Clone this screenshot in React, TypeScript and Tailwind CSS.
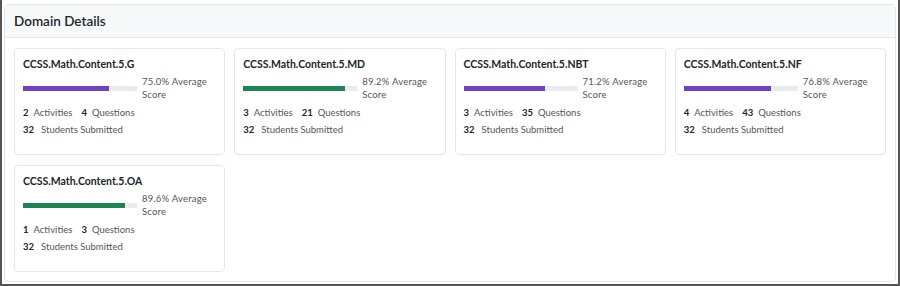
const domains = [
  { code: 'CCSS.Math.Content.5.G', score: 75.0, activities: 2, questions: 4, students: 32 },
  { code: 'CCSS.Math.Content.5.MD', score: 89.2, activities: 3, questions: 21, students: 32 },
  { code: 'CCSS.Math.Content.5.NBT', score: 71.2, activities: 3, questions: 35, students: 32 },
  { code: 'CCSS.Math.Content.5.NF', score: 76.8, activities: 4, questions: 43, students: 32 },
  { code: 'CCSS.Math.Content.5.OA', score: 89.6, activities: 1, questions: 3, students: 32 },
]

function DomainCard({ d }: { d: (typeof domains)[number] }) {
  const good = d.score >= 80
  return (
    <div className="bg-white border border-[#e3e6ea] rounded-[4px] px-[8px] pt-[8px] h-[107px]">
      <h3 className="text-[10.5px] leading-[14px] font-bold text-[#212529]">{d.code}</h3>
      <div className="flex items-center gap-[5px] mt-[4px]">
        <div className="w-[114px] h-[5px] bg-[#e9ecef] flex-shrink-0">
          <div
            className={good ? 'h-full bg-[#1b8553]' : 'h-full bg-[#6f42c1]'}
            style={{ width: `${d.score}%` }}
          />
        </div>
        <p className="text-[9.5px] leading-[13px] text-[#555] w-[74px] tracking-[0.2px]">
          {d.score.toFixed(1)}% Average Score
        </p>
      </div>
      <div className="text-[9.5px] leading-[17px] text-[#555] mt-[3px]">
        <p>
          <span className="font-bold text-[#212529] mr-[5px]">{d.activities}</span>Activities
          <span className="font-bold text-[#212529] ml-[9px] mr-[5px]">{d.questions}</span>Questions
        </p>
        <p>
          <span className="font-bold text-[#212529] mr-[7px]">{d.students}</span>Students Submitted
        </p>
      </div>
    </div>
  )
}

export default function App() {
  return (
    <div className="w-[900px] h-[286px] bg-white border-l-2 border-r-2 border-b-2 border-[#555] pt-[4px] px-[2px] pb-[2px] font-['Lato','Liberation_Sans',sans-serif]">
      <div className="border border-[#e3e6ea] rounded-[4px] h-[278px] overflow-hidden">
        {/* Header */}
        <div className="h-[33px] bg-[#f7f8fa] border-b border-[#e3e6ea] px-[9px] flex items-center">
          <h2 className="text-[13.5px] font-semibold text-[#212529]">Domain Details</h2>
        </div>

        {/* Cards */}
        <div className="grid grid-cols-4 gap-x-[9px] gap-y-[10px] px-[9px] pt-[10px]">
          {domains.map(d => <DomainCard key={d.code} d={d} />)}
        </div>
      </div>
    </div>
  )
}
